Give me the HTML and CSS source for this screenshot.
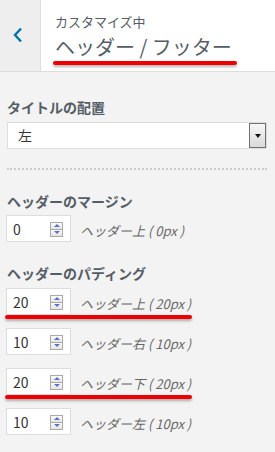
FILE: index.html
```
<!DOCTYPE html>
<html lang="ja">

<head>
    <meta charset="UTF-8">
    <meta name="viewport" content="width=device-width, initial-scale=1.0">
    <title>ヘッダー / フッター</title>
    <link rel="stylesheet" href="styles.css">
</head>

<body>
    <!-- Section header -->
    <div class="section-header">
        <div class="back-button">
            <svg width="12" height="16" viewBox="0 0 12 16">
                <polyline points="9,1.5 3,8 9,14.5" fill="none" stroke="#0073aa" stroke-width="2.4" />
            </svg>
        </div>
        <div class="section-title">
            <div class="section-sub">カスタマイズ中</div>
            <div class="section-name">ヘッダー / フッター</div>
            <span class="marker marker-title"></span>
        </div>
    </div>

    <div class="controls">
        <div class="control">
            <div class="control-title">タイトルの配置</div>
            <div class="select-box">
                <span class="select-value">左</span>
                <span class="select-button"><span class="arrow-down"></span></span>
            </div>
        </div>

        <div class="separator"></div>

        <div class="control">
            <div class="control-title">ヘッダーのマージン</div>
            <div class="number-row">
                <div class="number-box"><span>0</span><span class="spinner"><i class="up"></i><i class="down"></i></span></div>
                <span class="number-label">ヘッダー上 ( 0px )</span>
            </div>
        </div>

        <div class="control control-padding">
            <div class="control-title">ヘッダーのパディング</div>
            <div class="number-row">
                <div class="number-box"><span>20</span><span class="spinner"><i class="up"></i><i class="down"></i></span></div>
                <span class="number-label">ヘッダー上 ( 20px )</span>
                <span class="marker marker-row"></span>
            </div>
            <div class="number-row">
                <div class="number-box"><span>10</span><span class="spinner"><i class="up"></i><i class="down"></i></span></div>
                <span class="number-label">ヘッダー右 ( 10px )</span>
            </div>
            <div class="number-row">
                <div class="number-box"><span>20</span><span class="spinner"><i class="up"></i><i class="down"></i></span></div>
                <span class="number-label">ヘッダー下 ( 20px )</span>
                <span class="marker marker-row"></span>
            </div>
            <div class="number-row">
                <div class="number-box"><span>10</span><span class="spinner"><i class="up"></i><i class="down"></i></span></div>
                <span class="number-label">ヘッダー左 ( 10px )</span>
            </div>
        </div>
    </div>
</body>

</html>
```

FILE: styles.css
```
body {
    margin: 0;
    background-color: #f3f3f3;
    font-family: "Noto Sans CJK JP", "Noto Sans", sans-serif;
    color: #555d66;
    overflow: hidden;
}

.section-header {
    display: flex;
    height: 71px;
    background-color: #fff;
    border-bottom: 1px solid #dddddd;
    position: relative;
}

.back-button {
    width: 41px;
    border-right: 1px solid #dddddd;
    background-color: #eeeeee;
    display: flex;
    justify-content: center;
    padding-top: 27px;
    box-sizing: border-box;
    padding-right: 4px;
}

.section-title {
    padding: 13px 0 0 14px;
}

.section-sub {
    font-size: 13px;
    line-height: 18px;
    color: #555d66;
}

.section-name {
    font-size: 20px;
    line-height: 26px;
    margin-top: 3px;
    color: #555d66;
}

/* red annotation strokes */
.marker {
    position: absolute;
    height: 4px;
    background-color: #ee0000;
    border-radius: 2px;
    box-shadow: 0 2px 3px rgba(0, 0, 0, 0.3);
}

.marker-title {
    left: 53px;
    top: 61px;
    width: 184px;
}

.marker-row {
    left: -1px;
    top: 27px;
    width: 187px;
}

.controls {
    padding: 0 8px 0 7px;
}

.control-title {
    font-size: 14px;
    font-weight: bold;
    line-height: 20px;
    margin-bottom: 4px;
}

.control:first-child {
    padding-top: 25px;
}

.control:first-child .control-title {
    margin-bottom: 5px;
}

.select-box {
    display: flex;
    justify-content: space-between;
    height: 27px;
    box-sizing: border-box;
    border: 1px solid #dddddd;
    background-color: #fff;
}

.select-value {
    font-size: 14px;
    line-height: 25px;
    padding-left: 10px;
    color: #333;
}

.select-button {
    width: 17px;
    box-sizing: border-box;
    border: 1px solid #707070;
    background: linear-gradient(#f7f7f7, #dadada);
    display: flex;
    justify-content: center;
    align-items: center;
}

.arrow-down {
    width: 0;
    height: 0;
    border-left: 3.5px solid transparent;
    border-right: 3.5px solid transparent;
    border-top: 4px solid #111;
}

.separator {
    margin: 19px 0 21px;
    border-top: 2px dotted #cccccc;
}

.control-padding {
    margin-top: 21px;
}

.control-padding .control-title {
    margin-bottom: 5px;
}

.number-row {
    display: flex;
    align-items: center;
    margin-bottom: 13px;
    margin-left: -1px;
    position: relative;
}

.number-box {
    width: 65px;
    height: 27px;
    box-sizing: border-box;
    border: 1px solid #dddddd;
    background-color: #fff;
    display: flex;
    align-items: center;
    justify-content: space-between;
    padding: 0 7px 0 6px;
    font-size: 14px;
    color: #333;
}

.spinner {
    display: flex;
    flex-direction: column;
    width: 13px;
    height: 15px;
    margin-top: 1px;
}

.spinner i {
    flex: 1;
    border: 1px solid #aaaaaa;
    background: linear-gradient(#fbfbfb, #e4e4e4);
    position: relative;
}

.spinner i + i {
    border-top: none;
}

.spinner i::after {
    content: "";
    position: absolute;
    left: 2.5px;
    top: 1.5px;
    border-left: 3px solid transparent;
    border-right: 3px solid transparent;
}

.spinner .up::after {
    border-bottom: 3px solid #5a72c8;
}

.spinner .down::after {
    top: 1px;
    border-top: 3px solid #5a72c8;
}

.number-label {
    margin-left: 9px;
    margin-top: 4px;
    font-size: 13px;
    font-style: italic;
    color: #666;
}
```
